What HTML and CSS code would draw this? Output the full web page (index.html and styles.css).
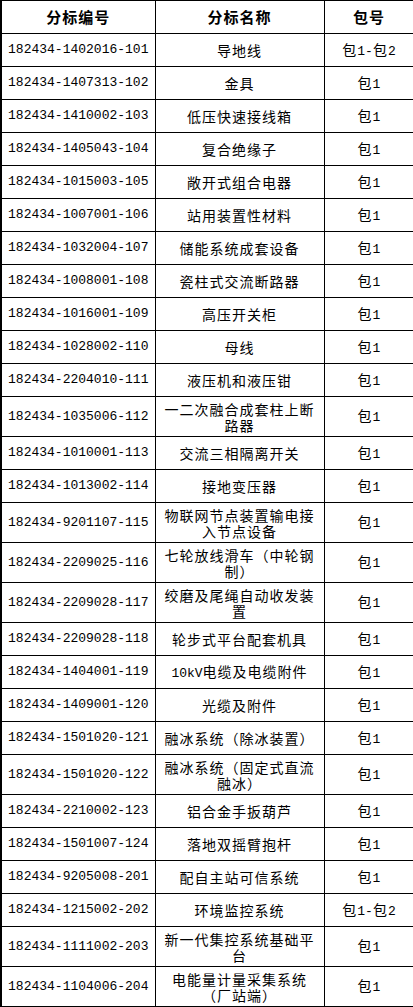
FILE: index.html
```html
<!DOCTYPE html>
<html lang="zh-CN">
<head>
<meta charset="utf-8">
<title>分标</title>
<link rel="stylesheet" href="styles.css">
</head>
<body>
<table class="bid">
<colgroup><col class="c1"><col class="c2"><col class="c3"></colgroup>
<thead>
<tr class="head"><th>分标编号</th><th>分标名称</th><th>包号</th></tr>
</thead>
<tbody>
<tr><td class="code">182434-1402016-101</td><td>导地线</td><td>包<span class="a">1-</span>包<span class="a">2</span></td></tr>
<tr><td class="code">182434-1407313-102</td><td>金具</td><td>包<span class="a">1</span></td></tr>
<tr><td class="code">182434-1410002-103</td><td>低压快速接线箱</td><td>包<span class="a">1</span></td></tr>
<tr><td class="code">182434-1405043-104</td><td>复合绝缘子</td><td>包<span class="a">1</span></td></tr>
<tr><td class="code">182434-1015003-105</td><td>敞开式组合电器</td><td>包<span class="a">1</span></td></tr>
<tr><td class="code">182434-1007001-106</td><td>站用装置性材料</td><td>包<span class="a">1</span></td></tr>
<tr><td class="code">182434-1032004-107</td><td>储能系统成套设备</td><td>包<span class="a">1</span></td></tr>
<tr><td class="code">182434-1008001-108</td><td>瓷柱式交流断路器</td><td>包<span class="a">1</span></td></tr>
<tr><td class="code">182434-1016001-109</td><td>高压开关柜</td><td>包<span class="a">1</span></td></tr>
<tr><td class="code">182434-1028002-110</td><td>母线</td><td>包<span class="a">1</span></td></tr>
<tr><td class="code">182434-2204010-111</td><td>液压机和液压钳</td><td>包<span class="a">1</span></td></tr>
<tr class="two"><td class="code">182434-1035006-112</td><td>一二次融合成套柱上断路器</td><td>包<span class="a">1</span></td></tr>
<tr><td class="code">182434-1010001-113</td><td>交流三相隔离开关</td><td>包<span class="a">1</span></td></tr>
<tr><td class="code">182434-1013002-114</td><td>接地变压器</td><td>包<span class="a">1</span></td></tr>
<tr class="two"><td class="code">182434-9201107-115</td><td>物联网节点装置输电接入节点设备</td><td>包<span class="a">1</span></td></tr>
<tr class="two"><td class="code">182434-2209025-116</td><td>七轮放线滑车（中轮钢制）</td><td>包<span class="a">1</span></td></tr>
<tr class="two"><td class="code">182434-2209028-117</td><td>绞磨及尾绳自动收发装置</td><td>包<span class="a">1</span></td></tr>
<tr><td class="code">182434-2209028-118</td><td>轮步式平台配套机具</td><td>包<span class="a">1</span></td></tr>
<tr><td class="code">182434-1404001-119</td><td><span class="a">10kV</span>电缆及电缆附件</td><td>包<span class="a">1</span></td></tr>
<tr><td class="code">182434-1409001-120</td><td>光缆及附件</td><td>包<span class="a">1</span></td></tr>
<tr><td class="code">182434-1501020-121</td><td>融冰系统（除冰装置）</td><td>包<span class="a">1</span></td></tr>
<tr class="two"><td class="code">182434-1501020-122</td><td>融冰系统（固定式直流融冰）</td><td>包<span class="a">1</span></td></tr>
<tr><td class="code">182434-2210002-123</td><td>铝合金手扳葫芦</td><td>包<span class="a">1</span></td></tr>
<tr><td class="code">182434-1501007-124</td><td>落地双摇臂抱杆</td><td>包<span class="a">1</span></td></tr>
<tr><td class="code">182434-9205008-201</td><td>配自主站可信系统</td><td>包<span class="a">1</span></td></tr>
<tr><td class="code">182434-1215002-202</td><td>环境监控系统</td><td>包<span class="a">1-</span>包<span class="a">2</span></td></tr>
<tr class="two"><td class="code">182434-1111002-203</td><td>新一代集控系统基础平台</td><td>包<span class="a">1</span></td></tr>
<tr class="two"><td class="code">182434-1104006-204</td><td>电能量计量采集系统（厂站端）</td><td>包<span class="a">1</span></td></tr>
</tbody>
</table>
</body>
</html>
```
FILE: styles.css
```css
html, body {
  margin: 0;
  padding: 0;
  background: #fff;
}

.bid {
  border-collapse: collapse;
  table-layout: fixed;
  width: 413px;
  color: #000;
  font-family: "Noto Sans CJK SC", sans-serif;
  font-size: 14px;
  letter-spacing: 1px;
}

.c1 { width: 154px; }
.c2 { width: 169px; }
.c3 { width: 90px; }

.bid th,
.bid td {
  border: 1px solid #000;
  padding: 0 4px;
  text-align: center;
  vertical-align: middle;
  line-height: 16px;
}

.bid th:first-child,
.bid td:first-child {
  border-left-width: 2px;
}

.bid tr {
  height: 33px;
}

.bid tr.two {
  height: 40px;
}

.bid th {
  font-size: 15px;
  font-weight: bold;
}

.bid td.code {
  font-family: "Liberation Mono", monospace;
  font-size: 13px;
  letter-spacing: 0;
  padding: 0;
}

.a {
  font-family: "Liberation Mono", monospace;
  font-size: 13px;
  letter-spacing: 0;
}
```
